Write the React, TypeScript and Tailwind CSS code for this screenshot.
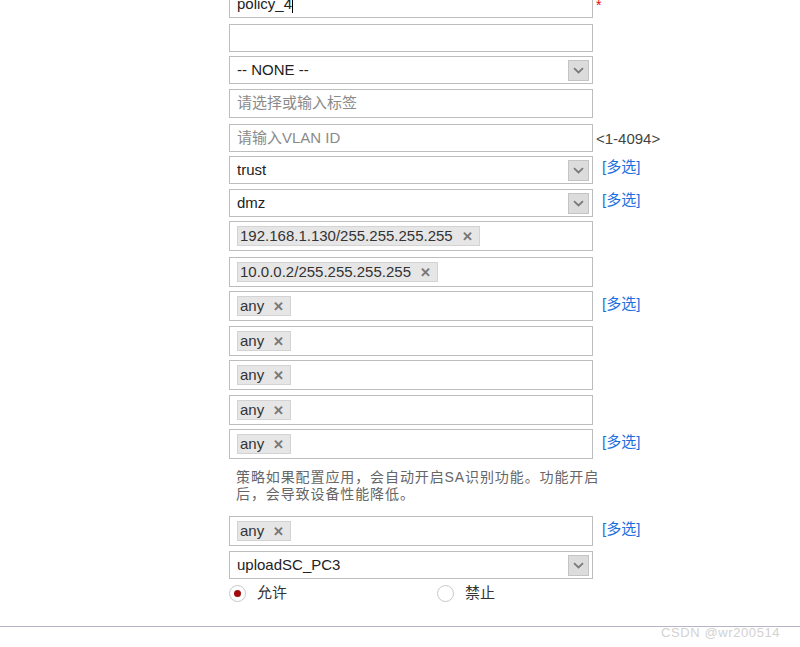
import React from 'react';

const FONT = { fontFamily: '"Liberation Sans", Arial, "Noto Sans CJK SC", sans-serif' };

const Chevron = () => (
  <div className="w-[21px] h-[21px] bg-[#dcdcdc] border border-[#c4c4c4] flex items-center justify-center">
    <svg width="11" height="7" viewBox="0 0 11 7">
      <path d="M1 1.2 L5.5 5.5 L10 1.2" fill="none" stroke="#7a7a7a" strokeWidth="1.8" />
    </svg>
  </div>
);

const Multi = () => <span className="ml-[9px] text-[15px] text-[#1a6fe0]">[多选]</span>;

const Tag = ({ text }: { text: string }) => (
  <span className="inline-flex items-center h-[20px] bg-[#e6e6e6] border border-[#d3d3d3] pl-[2px] pr-[6px] text-[15px] text-[#333]">
    {text}
    <span className="ml-[9px] text-[13px] font-bold text-[#777] leading-none">✕</span>
  </span>
);

const Box: React.FC<{ children?: React.ReactNode; className?: string }> = ({ children, className = '' }) => (
  <div className={`w-[364px] border border-[#bdbdbd] bg-white flex items-center ${className}`}>{children}</div>
);

const TagRow = ({ tags, multi, mt }: { tags: string[]; multi?: boolean; mt: string }) => (
  <div className={`flex items-center ${mt}`}>
    <Box className="h-[30px] pl-[7px] gap-[6px]">
      {tags.map(t => <Tag key={t} text={t} />)}
    </Box>
    {multi && <span className="-mt-[5px]"><Multi /></span>}
  </div>
);

export default function App() {
  return (
    <div className="w-[800px] h-[647px] bg-white overflow-hidden relative text-[#222]" style={FONT}>
      <div className="ml-[229px] -mt-[10px] flex flex-col">
        <div className="flex items-start">
          <Box className="h-[28px] px-[7px] text-[15px]">
            policy_4<span className="inline-block w-px h-[17px] bg-black" />
          </Box>
          <span className="ml-[3px] mt-[8px] text-[#e00] text-[14px] leading-none">*</span>
        </div>
        <Box className="h-[28px] mt-[6px]" />
        <Box className="h-[28px] mt-[4px] pl-[7px] pr-[3px] justify-between text-[15px]">
          -- NONE --<Chevron />
        </Box>
        <Box className="h-[29px] mt-[5px] pl-[7px] text-[15px] text-[#8a8a8a]">请选择或输入标签</Box>
        <div className="flex items-center mt-[6px]">
          <Box className="h-[28px] pl-[7px] text-[15px] text-[#8a8a8a]">请输入VLAN ID</Box>
          <span className="ml-[3px] mt-[2px] text-[15px] text-[#444]">&lt;1-4094&gt;</span>
        </div>
        <div className="flex items-center mt-[4px]">
          <Box className="h-[28px] pl-[7px] pr-[3px] justify-between text-[15px]">trust<Chevron /></Box>
          <span className="-mt-[6px]"><Multi /></span>
        </div>
        <div className="flex items-center mt-[5px]">
          <Box className="h-[28px] pl-[7px] pr-[3px] justify-between text-[15px]">dmz<Chevron /></Box>
          <span className="-mt-[6px]"><Multi /></span>
        </div>
        <TagRow tags={['192.168.1.130/255.255.255.255']} mt="mt-[4px]" />
        <TagRow tags={['10.0.0.2/255.255.255.255']} mt="mt-[6px]" />
        <TagRow tags={['any']} multi mt="mt-[4px]" />
        <TagRow tags={['any']} mt="mt-[5px]" />
        <TagRow tags={['any']} mt="mt-[4px]" />
        <TagRow tags={['any']} mt="mt-[5px]" />
        <TagRow tags={['any']} multi mt="mt-[4px]" />
        <p className="mt-[10px] ml-[7px] text-[14px] tracking-[0.9px] leading-[17px] text-[#666]">
          策略如果配置应用，会自动开启SA识别功能。功能开启<br />后，会导致设备性能降低。
        </p>
        <TagRow tags={['any']} multi mt="mt-[13px]" />
        <Box className="h-[28px] mt-[5px] pl-[7px] pr-[3px] justify-between text-[15px]">uploadSC_PC3<Chevron /></Box>
        <div className="flex items-center mt-[5px] h-[18px] text-[15px] text-[#333]">
          <span className="w-[17px] h-[17px] rounded-full border border-[#c8c8c8] bg-white flex items-center justify-center">
            <span className="w-[7px] h-[7px] rounded-full bg-[#a30b0b]" />
          </span>
          <span className="ml-[11px]">允许</span>
          <span className="ml-[150px] w-[17px] h-[17px] rounded-full border border-[#c8c8c8] bg-white" />
          <span className="ml-[11px]">禁止</span>
        </div>
      </div>
      <div className="mt-[24px] h-px bg-[#b4b6c6]" />
      <span className="absolute left-[661px] top-[623px] text-[13px] text-[#d2d2d2] tracking-[0.6px]">CSDN @wr200514</span>
    </div>
  );
}
